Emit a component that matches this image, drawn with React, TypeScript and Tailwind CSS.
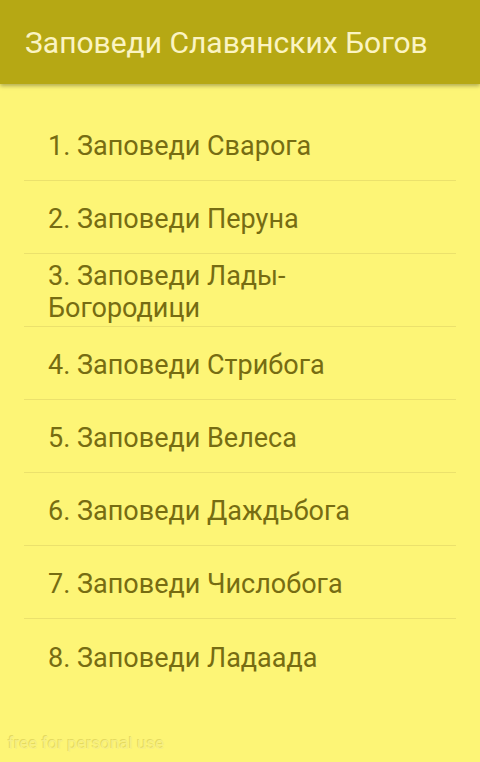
const items = [
  "1. Заповеди Сварога",
  "2. Заповеди Перуна",
  "3. Заповеди Лады-Богородици",
  "4. Заповеди Стрибога",
  "5. Заповеди Велеса",
  "6. Заповеди Даждьбога",
  "7. Заповеди Числобога",
  "8. Заповеди Ладаада"
]

export default function App() {
  return (
    <div className="relative flex h-[762px] w-[480px] flex-col overflow-hidden bg-[#fdf576] font-['Roboto',sans-serif]">
      <header className="z-10 flex h-[84px] shrink-0 items-center bg-[#b6a814] px-[25px] shadow-[0_2px_4px_rgba(0,0,0,0.3)]">
        <h1 className="text-[30px] font-normal text-[#fbf4c2]">
          Заповеди Славянских Богов
        </h1>
      </header>

      <ul className="mx-6 mt-[24px]">
        {items.map((item, i) => (
          <li
            key={item}
            className={
              i < items.length - 1
                ? "flex h-[73px] items-center border-b border-[#ebe16c] pl-6 pr-10 pt-1 text-[27px] leading-[32px] text-[#766c12]"
                : "flex h-[73px] items-center pl-6 pr-10 pt-1 text-[27px] leading-[32px] text-[#766c12]"
            }
          >
            {item}
          </li>
        ))}
      </ul>

      <div className="absolute bottom-[6px] left-[8px] text-[17px] text-[#f6ee84] [text-shadow:_-1px_-1px_0_#e4da60]">
        free for personal use
      </div>
    </div>
  )
}
